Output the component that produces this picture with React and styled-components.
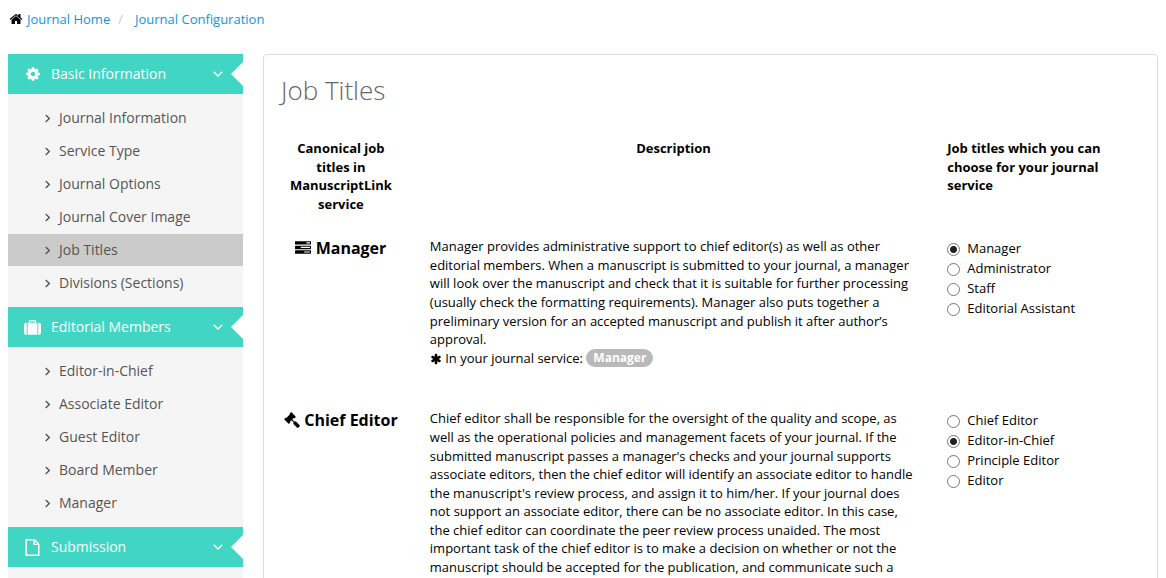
import React, { useState } from "react";
import styled, { createGlobalStyle } from "styled-components";

const GlobalStyle = createGlobalStyle`
  * { box-sizing: border-box; }
  html { scrollbar-width: none; }
  body {
    margin: 0;
    background: #fff;
    color: #000;
    font-family: "Open Sans", "Noto Sans", sans-serif;
    font-size: 13px;
    line-height: 1.43;
  }
`;

const ICONS = {
  home: "M1472 992v480q0 26-19 45t-45 19h-384v-384h-256v384h-384q-26 0-45-19t-19-45v-480q0-1 .5-3t.5-3l575-474 575 474q1 2 1 6zm223-69l-62 74q-8 9-21 11h-3q-13 0-21-7l-692-577-692 577q-12 8-24 7-13-2-21-11l-62-74q-8-10-7-23.5t11-21.5l719-599q32-26 76-26t76 26l244 204v-195q0-14 9-23t23-9h192q14 0 23 9t9 23v408l219 182q10 8 11 21.5t-7 23.5z",
  cog: "M1152 896q0-106-75-181t-181-75-181 75-75 181 75 181 181 75 181-75 75-181zm512-109v222q0 12-8 23t-20 13l-185 28q-19 54-39 91 35 50 107 138 10 12 10 25t-9 23q-27 37-99 108t-94 71q-12 0-26-9l-138-108q-44 23-91 38-16 136-29 186-7 28-36 28h-222q-14 0-24.5-8.5t-11.5-21.5l-28-184q-49-16-90-37l-141 107q-10 9-25 9-14 0-25-11-126-114-165-168-7-10-7-23 0-12 8-23 15-21 51-66.5t54-70.5q-27-50-41-99l-183-27q-13-2-21-12.5t-8-23.5v-222q0-12 8-23t19-13l186-28q14-46 39-92-40-57-107-138-10-12-10-24 0-10 9-23 26-36 98.5-107.5t94.5-71.5q13 0 26 10l138 107q44-23 91-38 16-136 29-186 7-28 36-28h222q14 0 24.5 8.5t11.5 21.5l28 184q49 16 90 37l142-107q9-9 24-9 13 0 25 10 129 119 165 170 7 8 7 22 0 12-8 23-15 21-51 66.5t-54 70.5q26 50 41 98l183 28q13 2 21 12.5t8 23.5z",
  suitcase: "M640 384h512v-128h-512v128zm-352 0v1280h-64q-92 0-158-66t-66-158v-832q0-92 66-158t158-66h64zm1120 0v1280h-1024v-1280h128v-160q0-40 28-68t68-28h576q40 0 68 28t28 68v160h128zm384 224v832q0 92-66 158t-158 66h-64v-1280h64q92 0 158 66t66 158z",
  file: "M160 0h980l492 492v1300h-1472zm150 150v1492h1172v-1000h-492v-492zm830 60v282h282z",
  tasks: "M1024 1408h640v-128h-640v128zm-384-512h1024v-128h-1024v128zm640-512h384v-128h-384v128zm512 832v256q0 26-19 45t-45 19h-1664q-26 0-45-19t-19-45v-256q0-26 19-45t45-19h1664q26 0 45 19t19 45zm0-512v256q0 26-19 45t-45 19h-1664q-26 0-45-19t-19-45v-256q0-26 19-45t45-19h1664q26 0 45 19t19 45zm0-512v256q0 26-19 45t-45 19h-1664q-26 0-45-19t-19-45v-256q0-26 19-45t45-19h1664q26 0 45 19t19 45z",
  gavel: "M1771 1536q0 53-37 90l-107 108q-39 37-91 37-53 0-90-37l-363-364q-38-36-38-90 0-53 43-96l-256-256-126 126q-14 14-34 14t-34-14q2 2 12.5 12t12.5 13 10 11.5 10 13.5 6 13.5 5.5 16.5 1.5 18q0 38-28 68-3 3-16.5 18t-19 20.5-18.5 16.5-22 15.5-22 9-26 4.5q-40 0-68-28l-408-408q-28-28-28-68 0-13 4.5-26t9-22 15.5-22 16.5-18.5 20.5-19 18-16.5q30-28 68-28 10 0 18 1.5t16.5 5.5 13.5 6 13.5 10 11.5 10 13 12.5 12 12.5q-14-14-14-34t14-34l348-348q14-14 34-14t34 14q-2-2-12.5-12t-12.5-13-10-11.5-10-13.5-6-13.5-5.5-16.5-1.5-18q0-38 28-68 3-3 16.5-18t19-20.5 18.5-16.5 22-15.5 22-9 26-4.5q40 0 68 28l408 408q28 28 28 68 0 13-4.5 26t-9 22-15.5 22-16.5 18.5-20.5 19-18 16.5q-30 28-68 28-10 0-18-1.5t-16.5-5.5-13.5-6-13.5-10-11.5-10-13-12.5-12-12.5q14 14 14 34t-14 34l-126 126 256 256q43-43 96-43 52 0 91 37l363 363q37 39 37 91z",
  asterisk: "M1546 1050q46 26 59.5 77.5t-12.5 97.5l-64 110q-26 46-77.5 59.5t-97.5-12.5l-266-153v307q0 52-38 90t-90 38h-128q-52 0-90-38t-38-90v-307l-266 153q-46 26-97.5 12.5t-77.5-59.5l-64-110q-26-46-12.5-97.5t59.5-77.5l266-154-266-154q-46-26-59.5-77.5t12.5-97.5l64-110q26-46 77.5-59.5t97.5 12.5l266 153v-307q0-52 38-90t90-38h128q52 0 90 38t38 90v307l266-153q46-26 97.5-12.5t77.5 59.5l64 110q26 46 12.5 97.5t-59.5 77.5l-266 154z",
};

const IconSvg = styled.svg`
  flex: none;
  width: ${(p) => p.$size}px;
  height: ${(p) => p.$size}px;
  fill: currentColor;
  vertical-align: -2px;
`;

const Icon = ({ name, size }) => (
  <IconSvg $size={size} viewBox="0 0 1792 1792" aria-hidden="true">
    <path fillRule={name === "file" ? "evenodd" : "nonzero"} d={ICONS[name]} />
  </IconSvg>
);

const AngleSvg = styled.svg`
  flex: none;
  fill: none;
  stroke: currentColor;
  stroke-width: 1.4;
`;

const AngleRight = () => (
  <AngleSvg width="6" height="9" viewBox="0 0 6 9" aria-hidden="true">
    <path d="M.7 1l3.6 3.5L.7 8" />
  </AngleSvg>
);

const AngleDown = () => (
  <AngleSvg width="10" height="6" viewBox="0 0 10 6" aria-hidden="true">
    <path d="M.7 .8L5 5 9.3 .8" />
  </AngleSvg>
);

const Page = styled.div`
  padding: 10px 8px 0;
`;

const Breadcrumb = styled.nav`
  display: flex;
  align-items: center;
  height: 18px;
  margin-bottom: 26px;
  padding-left: 1px;
  color: #000;
`;

const Crumb = styled.a`
  color: #0d96dc;
  text-decoration: none;
  margin-left: 4px;
`;

const Separator = styled.span`
  color: #ccc;
  margin: 0 8px;
`;

const Columns = styled.div`
  display: grid;
  grid-template-columns: 235px minmax(0, 1fr);
  gap: 20px;
`;

const Sidebar = styled.nav`
  background: #f5f5f5;
  font-size: 14px;
  line-height: 20px;
`;

const GroupHeader = styled.button`
  display: flex;
  align-items: center;
  width: 100%;
  height: 40px;
  padding: 0 0 0 16px;
  border: 0;
  background: #41d6c3;
  color: #fff;
  font: inherit;
  text-align: left;
`;

const GroupIcon = styled.span`
  display: flex;
  justify-content: center;
  width: 17px;
  margin-right: 10px;
`;

const GroupName = styled.span`
  flex: 1;
`;

const Notch = styled.span`
  margin-left: 8px;
  border: 12px solid transparent;
  border-left: 0;
  border-right-color: #fff;
`;

const SubMenu = styled.ul`
  list-style: none;
  margin: 0;
  padding: 8px 0;
  display: grid;
  gap: 1px;
`;

const SubLink = styled.a`
  display: flex;
  align-items: center;
  gap: 8px;
  height: 32px;
  padding-left: 37px;
  color: #555;
  text-decoration: none;
  background: ${(p) => (p.$active ? "#cbcbcb" : "transparent")};
`;

const Panel = styled.main`
  border: 1px solid #ddd;
  border-radius: 4px;
  padding: 16px 3px 20px;
`;

const Title = styled.h1`
  margin: 0 0 30px;
  padding: 0 14px;
  color: #666;
  font-size: 26px;
  line-height: 38px;
  font-weight: 300;
`;

const Table = styled.table`
  width: 100%;
  table-layout: fixed;
  border-collapse: collapse;
`;

const Col = styled.col`
  width: ${(p) => p.$share};
`;

const HeadCell = styled.th`
  padding: 0 15px 24px;
  text-align: ${(p) => p.$align || "center"};
  vertical-align: top;
  font-weight: 700;
`;

const JobHead = styled.th`
  padding: 0 15px;
  vertical-align: top;
  font-size: 16px;
  line-height: 22px;
  font-weight: 700;
  white-space: nowrap;
`;

const Cell = styled.td`
  padding: 0 15px 42px;
  vertical-align: top;
`;

const Text = styled.p`
  margin: 0;
`;

const Badge = styled.span`
  display: inline-block;
  height: 18px;
  padding: 0 7px;
  border-radius: 9px;
  background: #b9b9b9;
  color: #fff;
  font-size: 12px;
  line-height: 18px;
  font-weight: 700;
  vertical-align: top;
`;

const Choices = styled.div`
  display: grid;
  padding-top: 1px;
`;

const Choice = styled.label`
  display: flex;
  align-items: center;
  gap: 7px;
  height: 20px;
`;

const Radio = styled.input`
  appearance: none;
  flex: none;
  width: 13px;
  height: 13px;
  margin: 2px 0 0;
  border: 1px solid #777;
  border-radius: 50%;
  background: #fff;
  &:checked {
    background: radial-gradient(circle, #222 3px, #fff 4px);
  }
`;

const GROUPS = [
  {
    name: "Basic Information",
    icon: "cog",
    size: 16,
    items: ["Journal Information", "Service Type", "Journal Options", "Journal Cover Image", "Job Titles", "Divisions (Sections)"],
  },
  {
    name: "Editorial Members",
    icon: "suitcase",
    size: 17,
    items: ["Editor-in-Chief", "Associate Editor", "Guest Editor", "Board Member", "Manager"],
  },
  { name: "Submission", icon: "file", size: 17, items: [] },
];

const JOBS = [
  {
    name: "Manager",
    icon: "tasks",
    text: "Manager provides administrative support to chief editor(s) as well as other editorial members. When a manuscript is submitted to your journal, a manager will look over the manuscript and check that it is suitable for further processing (usually check the formatting requirements). Manager also puts together a preliminary version for an accepted manuscript and publish it after author’s approval.",
    service: "Manager",
    choices: ["Manager", "Administrator", "Staff", "Editorial Assistant"],
    initial: "Manager",
  },
  {
    name: "Chief Editor",
    icon: "gavel",
    text: "Chief editor shall be responsible for the oversight of the quality and scope, as well as the operational policies and management facets of your journal. If the submitted manuscript passes a manager's checks and your journal supports associate editors, then the chief editor will identify an associate editor to handle the manuscript's review process, and assign it to him/her. If your journal does not support an associate editor, there can be no associate editor. In this case, the chief editor can coordinate the peer review process unaided. The most important task of the chief editor is to make a decision on whether or not the manuscript should be accepted for the publication, and communicate such a",
    choices: ["Chief Editor", "Editor-in-Chief", "Principle Editor", "Editor"],
    initial: "Editor-in-Chief",
  },
];

function JobRow({ job }) {
  const [choice, setChoice] = useState(job.initial);
  return (
    <tr>
      <JobHead scope="row">
        <Icon name={job.icon} size={16} /> {job.name}
      </JobHead>
      <Cell>
        <Text>{job.text}</Text>
        {job.service && (
          <Text>
            <Icon name="asterisk" size={12} /> In your journal service: <Badge>{job.service}</Badge>
          </Text>
        )}
      </Cell>
      <Cell>
        <Choices role="radiogroup" aria-label={job.name}>
          {job.choices.map((c) => (
            <Choice key={c}>
              <Radio type="radio" name={job.name} checked={choice === c} onChange={() => setChoice(c)} />
              {c}
            </Choice>
          ))}
        </Choices>
      </Cell>
    </tr>
  );
}

export default function App() {
  return (
    <Page>
      <GlobalStyle />
      <Breadcrumb>
        <Icon name="home" size={14} />
        <Crumb href="#home">Journal Home</Crumb>
        <Separator>/</Separator>
        <Crumb href="#configuration">Journal Configuration</Crumb>
      </Breadcrumb>
      <Columns>
        <Sidebar>
          {GROUPS.map((g) => (
            <div key={g.name}>
              <GroupHeader type="button">
                <GroupIcon>
                  <Icon name={g.icon} size={g.size} />
                </GroupIcon>
                <GroupName>{g.name}</GroupName>
                <AngleDown />
                <Notch />
              </GroupHeader>
              <SubMenu>
                {g.items.map((item) => (
                  <li key={item}>
                    <SubLink href="#section" $active={item === "Job Titles"}>
                      <AngleRight />
                      {item}
                    </SubLink>
                  </li>
                ))}
              </SubMenu>
            </div>
          ))}
        </Sidebar>
        <Panel>
          <Title>Job Titles</Title>
          <Table>
            <colgroup>
              <Col $share="16.6667%" />
              <Col $share="58.3333%" />
              <Col $share="25%" />
            </colgroup>
            <thead>
              <tr>
                <HeadCell scope="col">Canonical job titles in ManuscriptLink service</HeadCell>
                <HeadCell scope="col">Description</HeadCell>
                <HeadCell scope="col" $align="left">Job titles which you can choose for your journal service</HeadCell>
              </tr>
            </thead>
            <tbody>
              {JOBS.map((job) => (
                <JobRow key={job.name} job={job} />
              ))}
            </tbody>
          </Table>
        </Panel>
      </Columns>
    </Page>
  );
}
